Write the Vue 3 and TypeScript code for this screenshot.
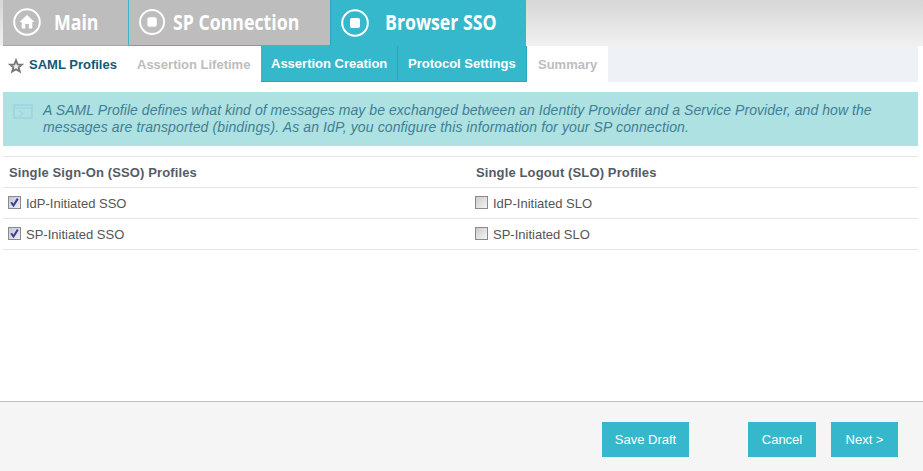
<script setup lang="ts">
interface Tab { label: string; icon: 'home' | 'stop'; cls: string }
const tabs: Tab[] = [
  { label: 'Main', icon: 'home', cls: 'main' },
  { label: 'SP Connection', icon: 'stop', cls: 'sp' },
  { label: 'Browser SSO', icon: 'stop', cls: 'sso' },
]
const rows = [
  { left: 'IdP-Initiated SSO', right: 'IdP-Initiated SLO' },
  { left: 'SP-Initiated SSO', right: 'SP-Initiated SLO' },
]
</script>

<template>
  <div class="page">
    <div class="top">
      <div v-for="t in tabs" :key="t.label" class="tab" :class="t.cls">
        <svg class="ticon" width="30" height="30" viewBox="0 0 30 30">
          <circle cx="15" cy="15" r="12.8" fill="none" stroke="#fff" stroke-width="2" />
          <path v-if="t.icon === 'home'" d="M15 8 L22.5 15 H20.3 V21.5 H16.8 V17 H13.2 V21.5 H9.7 V15 H7.5 Z" fill="#fff" />
          <rect v-else x="10" y="10" width="10" height="10" rx="2" fill="#fff" />
        </svg>
        <span class="tlabel">{{ t.label }}</span>
      </div>
    </div>

    <div class="sub">
      <div class="s current">
        <svg width="16" height="16" viewBox="0 0 16 16" class="star">
          <path d="M8 2.2 L9.6 6.3 L14 6.5 L10.6 9.3 L11.8 13.6 L8 11.2 L4.2 13.6 L5.4 9.3 L2 6.5 L6.4 6.3 Z" fill="#eee" stroke="#777" stroke-width="1.8" />
        </svg>
        SAML Profiles
      </div>
      <div class="s muted life">Assertion Lifetime</div>
      <div class="s active creation">Assertion Creation</div>
      <div class="s active protocol">Protocol Settings</div>
      <div class="s muted summary">Summary</div>
    </div>

    <div class="info">
      <svg class="iicon" width="20" height="15" viewBox="0 0 20 15">
        <rect x="1" y="1" width="18" height="13" fill="none" stroke="#9fd6e2" stroke-width="2" />
        <path d="M2 4 H18" stroke="#9fd6e2" stroke-width="1.5" />
        <path d="M6 6.5 L10 9.5 L6 12.5" fill="none" stroke="#9fd6e2" stroke-width="1.5" />
      </svg>
      <p>
        <span class="l1">A SAML Profile defines what kind of messages may be exchanged between an Identity Provider and a Service Provider, and how the</span>
        <span class="l2">messages are transported (bindings). As an IdP, you configure this information for your SP connection.</span>
      </p>
    </div>

    <div class="table">
      <div class="row head">
        <div class="c1">Single Sign-On (SSO) Profiles</div>
        <div class="c2">Single Logout (SLO) Profiles</div>
      </div>
      <div v-for="r in rows" :key="r.left" class="row">
        <label class="c1 item"><span class="box on"><svg width="11" height="11" viewBox="0 0 11 11"><path d="M2.2 5.2 L4.5 8.5 L8.8 1.6" fill="none" stroke="#3d3f8f" stroke-width="2" /></svg></span>{{ r.left }}</label>
        <label class="c2 item"><span class="box"></span>{{ r.right }}</label>
      </div>
    </div>

    <div class="foot">
      <button class="btn draft">Save Draft</button>
      <button class="btn cancel">Cancel</button>
      <button class="btn next">Next &gt;</button>
    </div>
  </div>
</template>

<style>
html, body { margin: 0; background: #fff; }
</style>

<style scoped>
.page {
  width: 923px;
  height: 471px;
  display: flex;
  flex-direction: column;
  font-family: "Liberation Sans", Arial, sans-serif;
  overflow: hidden;
  background: #fff;
}
.top {
  height: 46px;
  padding-left: 3px;
  display: flex;
  box-sizing: border-box;
  background: linear-gradient(#d6d6d6, #f1f1f1);
}
.tab {
  display: flex;
  align-items: center;
  box-sizing: border-box;
  color: #fff;
  height: 46px;
}
.ticon { margin-top: -1px; }
.tlabel {
  font-family: "Open Sans", sans-serif;
  font-weight: 700;
  font-size: 22px;
  white-space: nowrap;
  transform: translateY(-2px) scaleX(0.805);
  transform-origin: left center;
}
.main {
  width: 126px;
  background: #bdbdbd;
  border-right: 1px solid #36b8cc;
  border-bottom: 1px solid #a8a8a8;
  padding-left: 9px;
}
.main .tlabel { margin-left: 12px; }
.sp {
  width: 201px;
  background: #bdbdbd;
  border-bottom: 1px solid #36b8cc;
  padding-left: 9px;
}
.sp .tlabel { margin-left: 7px; }
.sso {
  width: 196px;
  background: #36b8cc;
  border-left: 1px solid #2ba6ba;
  padding-left: 9px;
}
.sso .tlabel { margin-left: 15px; }
.sub {
  margin: 0 5px 0 3px;
  height: 36px;
  display: flex;
  background: #eef2f7;
  font-size: 13px;
  font-weight: 700;
}
.s {
  height: 36px;
  box-sizing: border-box;
  display: flex;
  align-items: center;
  background: #fff;
  white-space: nowrap;
}
.current { width: 125px; padding-left: 5px; color: #0f5a78; gap: 5px; }
.star { margin-top: 3px; }
.muted { color: #bdbdbd; }
.life { width: 133px; padding-left: 9px; }
.active {
  background: #36b8cc;
  color: #fff;
  border-right: 1px solid #2ba6ba;
  border-bottom: 1px solid #2ba6ba;
  padding-bottom: 1px;
}
.creation { width: 137px; padding-left: 10px; }
.protocol { width: 129px; padding-left: 10px; }
.summary { width: 81px; padding-left: 11px; }
.info {
  margin: 10px 5px 0 3px;
  height: 54px;
  box-sizing: border-box;
  background: #aee1e1;
  display: flex;
  color: #3f7f95;
  font-size: 14px;
  font-style: italic;
  line-height: 17px;
}
.iicon { margin: 12px 0 0 10px; flex: none; }
.info p { margin: 10px 0 0 10px; width: 850px; white-space: nowrap; }
.l1, .l2 { display: block; }
.l1 { letter-spacing: 0.054px; }
.l2 { letter-spacing: 0.12px; }
.table {
  margin: 10px 5px 0 3px;
  border-top: 1px solid #e6e6e6;
}
.row {
  height: 31px;
  box-sizing: border-box;
  border-bottom: 1px solid #e6e6e6;
  display: flex;
  align-items: center;
  font-size: 13px;
  color: #555;
}
.head { font-weight: 700; color: #555b66; height: 31px; letter-spacing: 0.13px; }
.c1 { width: 467px; padding-left: 6px; box-sizing: border-box; }
.c2 { padding-left: 6px; }
.item { display: flex; align-items: center; gap: 5px; padding-left: 5px; }
.box {
  width: 13px;
  height: 13px;
  box-sizing: border-box;
  border: 1px solid #8a8a8a;
  background: linear-gradient(135deg, #ccc, #f4f4f4);
  display: flex;
  align-items: center;
  justify-content: center;
  margin-top: -2px;
}
.box.on { background: linear-gradient(135deg, #c4c6dc, #eeeef6); }
.foot {
  margin-top: auto;
  height: 70px;
  box-sizing: border-box;
  border-top: 1px solid #bdbdbd;
  background: #f5f5f5;
  display: flex;
  align-items: flex-start;
  padding: 20px 0 0 602px;
}
.btn {
  height: 35px;
  border: 0;
  padding: 0;
  background: #36b8cc;
  color: #fff;
  font-family: "Liberation Sans", Arial, sans-serif;
  font-size: 13px;
}
.draft { width: 87px; }
.cancel { width: 68px; margin-left: 59px; }
.next { width: 67px; margin-left: 15px; }
</style>
